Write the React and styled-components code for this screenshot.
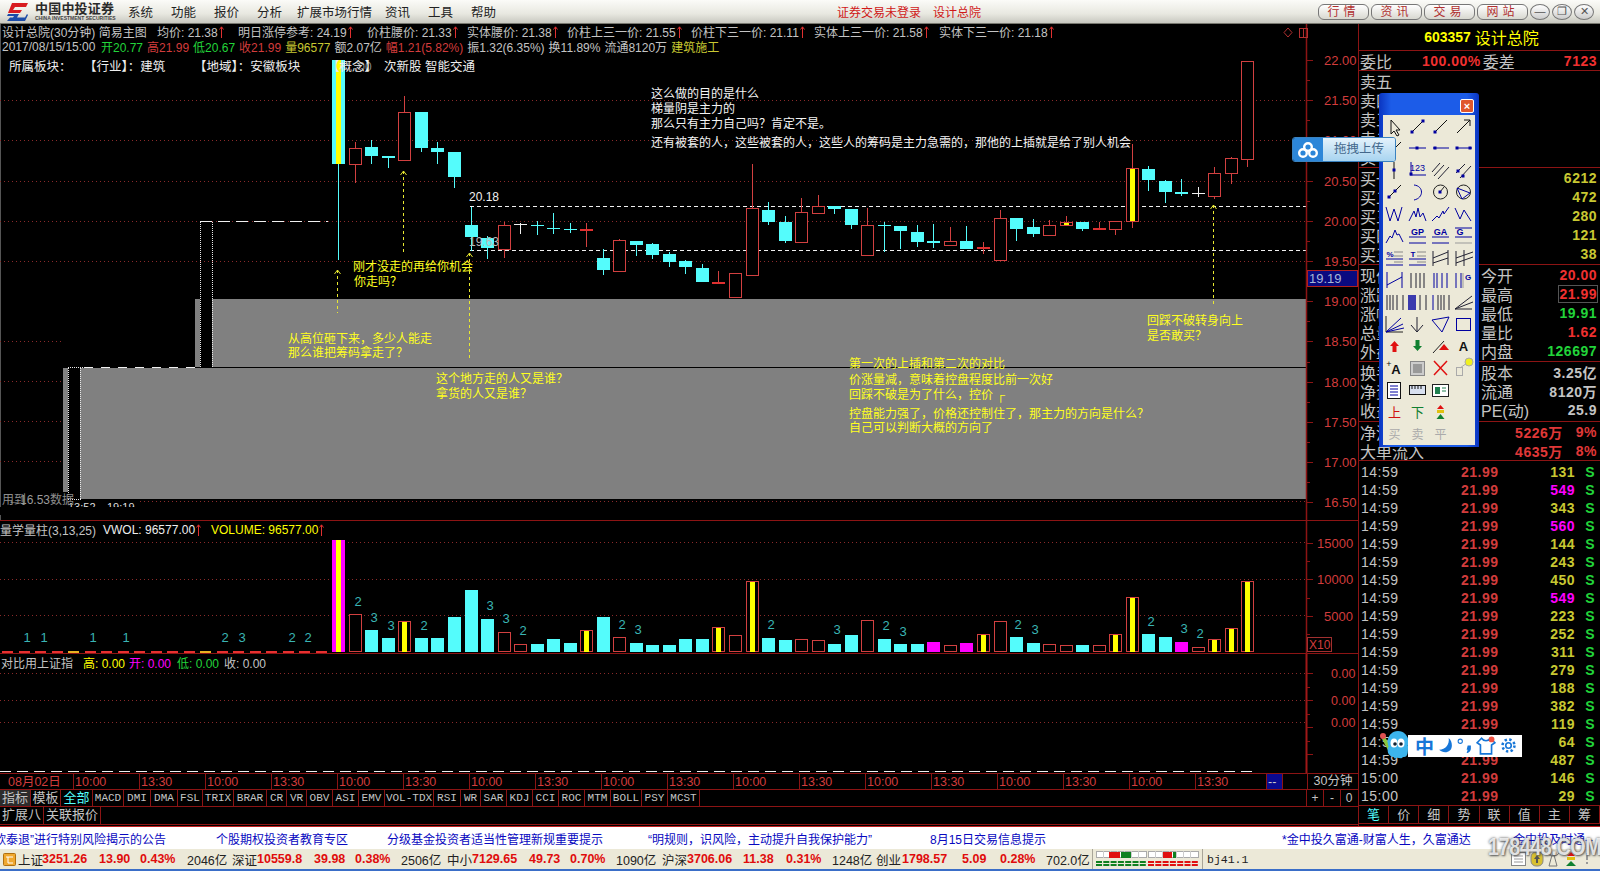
import React from 'react'
import styled, { createGlobalStyle } from 'styled-components'

const SANS = '"Liberation Sans","Noto Sans CJK SC",sans-serif'
const RED = '#d23c3c'
const GRID = '#8a2a2a'
const LINE = '#8c1414'
const CYAN = '#54fcfc'
const YELLOW = '#ffff00'
const MAGENTA = '#ff00ff'
const GRAY = '#c4c4c4'
const GREEN = '#22d43a'
const OLIVE = '#c8c832'

const GlobalStyle = createGlobalStyle`
    html, body{
        margin: 0;
        padding: 0;
        background: #000;
        overflow: hidden;
    }
    *{
        box-sizing: border-box;
    }
`

const Page = styled.div`
    width: 1600px;
    height: 871px;
    position: relative;
    display: flex;
    flex-direction: column;
    overflow: hidden;
    background: #000;
    font-family: ${SANS};
    font-size: 12px;
    color: ${GRAY};
`

/* ---------- title bar ---------- */

const TitleBar = styled.div`
    height: 24px;
    flex: none;
    display: flex;
    align-items: center;
    background: linear-gradient(#fbfbf8, #e8e8e0 60%, #c8c8c0);
    border-bottom: 1px solid #77776f;
    color: #222;
`
const Brand = styled.div`
    width: 128px;
    display: flex;
    align-items: center;
    padding-left: 7px;
`
const BrandText = styled.div`
    margin-left: 7px;
    display: flex;
    flex-direction: column;
    line-height: 1;
    strong{
        font-size: 13px;
        letter-spacing: 0.2px;
        color: #2a2a2a;
    }
    span{
        margin-top: 1px;
        font-size: 5px;
        font-weight: 700;
        color: #444;
        white-space: nowrap;
    }
`
const Menu = styled.div`
    display: flex;
    width: 709px;
`
const MenuItem = styled.span`
    width: ${p => p.$w}px;
    font-size: 12.5px;
`
const LoginState = styled.div`
    display: flex;
    gap: 12px;
    color: #d01818;
    font-size: 12px;
`
const WindowButtons = styled.div`
    margin-left: auto;
    margin-right: 6px;
    display: flex;
    align-items: center;
    gap: 2px;
`
const PillButton = styled.div`
    width: 51px;
    height: 16px;
    border: 1px solid #777;
    border-radius: 6px;
    background: linear-gradient(#fff, #d8d8d0);
    font-size: 12px;
    line-height: 14px;
    text-align: center;
    letter-spacing: 4px;
    color: #b03030;
`
const RoundButton = styled.div`
    width: 20px;
    height: 16px;
    border: 1px solid #777;
    border-radius: 50%;
    background: linear-gradient(#fff, #ccc);
    font-size: 11px;
    line-height: 13px;
    text-align: center;
    color: #555;
`

/* ---------- panes ---------- */

const Body = styled.div`
    display: flex;
    height: 802px;
    flex: none;
`
const LeftColumn = styled.div`
    width: 1358px;
    flex: none;
    display: flex;
    flex-direction: column;
`
const Pane = styled.div`
    position: relative;
    height: ${p => p.$h}px;
    flex: none;
    border-bottom: ${p => p.$line ? `1px solid ${LINE}` : 'none'};
`
const ChartSvg = styled.svg`
    position: absolute;
    left: 0;
    top: 0;
    display: block;
    font-family: ${SANS};
`
const InfoRow = styled.div`
    position: relative;
    display: flex;
    align-items: center;
    height: ${p => p.$h || 15}px;
    padding-left: ${p => p.$pad || 0}px;
    gap: ${p => p.$gap || 0}px;
    white-space: nowrap;
    font-size: ${p => p.$fs || 12}px;
`
const InfoCell = styled.span`
    display: inline-flex;
    align-items: center;
    width: ${p => p.$w ? `${p.$w}px` : 'auto'};
    flex: none;
    color: ${p => p.$c || GRAY};
`
const Shade = styled.span`
    color: ${p => p.$c};
`
const Annotation = styled.div`
    position: absolute;
    left: ${p => p.$x}px;
    top: ${p => p.$y - 7}px;
    height: 14px;
    line-height: 14px;
    font-size: 12px;
    white-space: nowrap;
    color: ${p => p.$c || (p.$white ? '#f4f4f4' : '#ffff20')};
`

const AxisRow = styled.div`
    height: 17px;
    flex: none;
    display: flex;
    border-top: 1px solid ${LINE};
    border-bottom: 1px solid ${LINE};
`
const TimeCell = styled.div`
    width: ${p => p.$w}px;
    flex: none;
    padding-left: ${p => p.$pad ?? 1}px;
    border-right: 1px solid ${LINE};
    line-height: 17px;
    font-size: 12.5px;
    color: ${p => p.$blue ? '#ccc' : RED};
    background: ${p => p.$blue ? '#0a0a90' : 'transparent'};
`
const PeriodCell = styled.div`
    width: 51px;
    margin-left: auto;
    border-left: 1px solid ${LINE};
    text-align: center;
    line-height: 15px;
    font-size: 12.5px;
    color: ${GRAY};
`
const TabRow = styled.div`
    height: ${p => p.$h}px;
    flex: none;
    display: flex;
    border-bottom: 1px solid ${LINE};
`
const Tab = styled.div`
    width: ${p => p.$w}px;
    flex: none;
    border-right: 1px solid ${LINE};
    text-align: center;
    line-height: 16px;
    white-space: nowrap;
    font-size: ${p => p.$latin ? 11 : 13}px;
    font-family: ${p => p.$latin ? '"Liberation Mono",monospace' : SANS};
    color: ${p => p.$on ? CYAN : GRAY};
    background: ${p => p.$dark ? '#2c2c2c' : 'transparent'};
`
const StepCell = styled.div`
    width: 17px;
    flex: none;
    border-left: 1px solid ${LINE};
    text-align: center;
    line-height: 16px;
    color: ${GRAY};
`
const StepBox = styled.div`
    margin-left: auto;
    display: flex;
    width: 52px;
`

/* ---------- quote panel ---------- */

const QuotePanel = styled.div`
    width: 242px;
    flex: none;
    display: flex;
    flex-direction: column;
    border-left: 1px solid ${LINE};
`
const PanelTitle = styled.div`
    height: 27px;
    flex: none;
    display: flex;
    align-items: center;
    justify-content: center;
    gap: 4px;
    padding-left: 4px;
    border-bottom: 1px solid ${LINE};
    color: ${YELLOW};
    font-size: 16px;
    strong{
        font-size: 14px;
    }
`
const Section = styled.div`
    flex: none;
    border-bottom: 1px solid ${LINE};
    padding-bottom: ${p => p.$pb || 0}px;
`
const QuoteRow = styled.div`
    height: ${p => p.$h || 19}px;
    display: flex;
    align-items: center;
    padding: 0 3px 0 1px;
    white-space: nowrap;
`
const QuoteLabel = styled.span`
    width: ${p => p.$w || 'auto'}px;
    flex: none;
    font-size: 16px;
    color: ${GRAY};
`
const QuoteValue = styled.span`
    margin-left: ${p => p.$left ? 0 : 'auto'};
    font-size: 14px;
    font-weight: 700;
    letter-spacing: 0.5px;
    color: ${p => p.$c};
    outline: ${p => p.$boxed ? '1px solid #555' : 'none'};
`
const TickList = styled.div`
    flex: none;
    height: 345px;
    padding-top: 2px;
    border-bottom: 1px solid ${LINE};
`
const TickRow = styled.div`
    height: 18px;
    display: grid;
    grid-template-columns: 100px 50px 64px 1fr;
    align-items: center;
    padding-left: 2px;
    font-size: 14px;
    letter-spacing: 0.5px;
    span:nth-child(1){ color: ${GRAY}; }
    span:nth-child(2){ color: ${RED}; font-weight: 700; }
    span:nth-child(3){ color: ${p => p.$hot ? MAGENTA : OLIVE}; font-weight: 700; text-align: right; }
    span:nth-child(4){ color: ${GREEN}; font-weight: 700; text-align: right; padding-right: 5px; }
`
const PanelTabs = styled.div`
    height: 18px;
    flex: none;
    display: grid;
    grid-template-columns: repeat(8, 1fr);
    border-bottom: 1px solid ${LINE};
`
const PanelTab = styled.div`
    border-right: 1px solid ${LINE};
    text-align: center;
    line-height: 17px;
    font-size: 13px;
    color: ${p => p.$on ? CYAN : GRAY};
`

/* ---------- bottom bars ---------- */

const NewsBar = styled.div`
    height: 23px;
    flex: none;
    display: flex;
    align-items: center;
    overflow: hidden;
    background: #fff;
    border-top: 1px solid #c02020;
    color: #0808c0;
    font-size: 12px;
    white-space: nowrap;
`
const NewsItem = styled.span`
    width: ${p => p.$w}px;
    flex: none;
    margin-left: ${p => p.$ml || 0}px;
`
const StatusBar = styled.div`
    height: 22px;
    flex: none;
    display: flex;
    align-items: center;
    background: #ece9d8;
    border-bottom: 2px solid #3a6ec8;
    color: #222;
    white-space: nowrap;
    font-size: 12.5px;
`
const StatusCell = styled.span`
    width: ${p => p.$w}px;
    flex: none;
    font-weight: ${p => p.$red ? 700 : 400};
    color: ${p => p.$red ? '#e00c0c' : '#222'};
`
const StatusDivider = styled.span`
    width: 1px;
    height: 20px;
    flex: none;
    margin-right: ${p => p.$mr}px;
    background: #a8a598;
`
const StatusGap = styled.span`
    width: ${p => p.$w}px;
    flex: none;
`
const ServerName = styled.span`
    width: 304px;
    flex: none;
    font-family: "Liberation Mono",monospace;
    font-size: 11.5px;
`

/* ---------- floating windows ---------- */

const ToolWindow = styled.div`
    position: absolute;
    left: 1379px;
    top: 93px;
    width: 100px;
    height: 354px;
    padding: 0 4px 4px;
    display: flex;
    flex-direction: column;
    background: linear-gradient(90deg, #0a34c0, #1c5ce8 12%, #1c5ce8 88%, #0a34c0);
    border-radius: 3px 3px 0 0;
`
const ToolHead = styled.div`
    height: 22px;
    flex: none;
    display: flex;
    justify-content: flex-end;
    align-items: center;
    padding: 3px 1px 0 0;
`
const CloseButton = styled.div`
    width: 14px;
    height: 14px;
    border: 1px solid #fff;
    border-radius: 2px;
    background: #e0562c;
    color: #fff;
    font-size: 11px;
    font-weight: 700;
    line-height: 12px;
    text-align: center;
`
const ToolGrid = styled.div`
    flex: 1;
    display: grid;
    grid-template-columns: repeat(4, 23px);
    grid-auto-rows: 22px;
    background: #ece9d8;
`
const ToolCell = styled.svg`
    width: 23px;
    height: 22px;
    font-family: ${SANS};
`
const UploadChip = styled.div`
    position: absolute;
    left: 1292px;
    top: 137px;
    width: 104px;
    height: 25px;
    display: flex;
    border: 1px solid #3a82c0;
    border-radius: 3px;
    overflow: hidden;
`
const UploadIcon = styled.div`
    width: 30px;
    display: flex;
    align-items: center;
    justify-content: center;
    background: #2c86d8;
`
const UploadLabel = styled.div`
    flex: 1;
    background: linear-gradient(#e4f2fb, #a8d4f0);
    color: #44688c;
    font-size: 12.5px;
    line-height: 23px;
    text-align: center;
`
const ImeBar = styled.div`
    position: absolute;
    left: 1380px;
    top: 731px;
    display: flex;
    align-items: center;
`
const ImeStrip = styled.div`
    width: 114px;
    height: 22px;
    margin-left: -1px;
    display: flex;
    align-items: center;
    justify-content: space-around;
    padding: 0 3px 0 5px;
    background: #fff;
    color: #1676d8;
    font-size: 19px;
    font-weight: 700;
`
const Watermark = styled.div`
    position: absolute;
    left: 1488px;
    top: 834px;
    font-family: "Liberation Sans",sans-serif;
    font-size: 23px;
    font-weight: 700;
    letter-spacing: -0.5px;
    transform: scaleX(0.86);
    transform-origin: left top;
    color: rgba(255,255,255,.82);
    text-shadow: 0 0 3px rgba(70,70,70,.95), 1px 1px 2px rgba(90,90,90,.8);
    white-space: nowrap;
`

/* ---------- data ---------- */

// kind, body top, body bottom, wick top, wick bottom (taken from a 3x crop, y = 50 + v / 3)
const candles = [
    ['c', 30, 342, 30, 630], ['r', 295, 341, 277, 398], ['c', 291, 318, 270, 341], ['c', 318, 324, 318, 353],
    ['r', 187, 329, 138, 329], ['c', 186, 294, 186, 305], ['c', 294, 306, 276, 341], ['c', 306, 381, 306, 413],
    ['c', 525, 561, 470, 602], ['c', 565, 594, 558, 626], ['r', 526, 596, 516, 623], ['w', 522, 522, 520, 553],
    ['c', 525, 529, 514, 554], ['c', 534, 538, 490, 551], ['c', 537, 540, 520, 548], ['r', 538, 542, 519, 590],
    ['c', 625, 660, 598, 674], ['r', 571, 664, 568, 664], ['c', 573, 584, 573, 617], ['c', 582, 614, 578, 626],
    ['c', 612, 636, 605, 650], ['c', 632, 651, 630, 671], ['c', 654, 695, 643, 695], ['r', 697, 701, 664, 701],
    ['r', 670, 741, 670, 744], ['r', 475, 674, 342, 674], ['c', 480, 516, 456, 525], ['c', 516, 573, 498, 578],
    ['r', 487, 575, 444, 575], ['r', 468, 488, 435, 488], ['c', 468, 476, 468, 491], ['c', 477, 524, 477, 536],
    ['r', 526, 616, 474, 616], ['c', 524, 527, 515, 605], ['c', 528, 543, 528, 597], ['c', 546, 575, 526, 590],
    ['c', 573, 578, 522, 593], ['r', 574, 586, 531, 586], ['c', 573, 597, 528, 597], ['r', 591, 598, 577, 613],
    ['r', 505, 631, 480, 632], ['c', 504, 536, 504, 572], ['c', 531, 552, 507, 561], ['r', 526, 554, 511, 554],
    ['y', 516, 524, 498, 524], ['c', 516, 537, 516, 542], ['r', 535, 539, 515, 539], ['r', 514, 536, 514, 554],
    ['y', 355, 514, 283, 534], ['c', 358, 390, 349, 422], ['c', 393, 426, 391, 458], ['c', 427, 431, 388, 438],
    ['w', 430, 430, 411, 441], ['r', 368, 437, 351, 447], ['r', 325, 368, 322, 401], ['r', 34, 328, 34, 350],
]

// kind, top of the bar (y = 500 + v / 3 for the first 18, 520 + v / 3 after)
const volumes = [
    ['m', 120], ['r', 343], ['c', 390], ['c', 414], ['y', 364], ['c', 414], ['c', 414], ['c', 351], ['c', 270],
    ['c', 357], ['r', 397], ['r', 433], ['c', 432], ['c', 417], ['c', 429], ['y', 391], ['c', 351], ['r', 412],
].map(([k, v]) => [k, 500 + v / 3]).concat([
    ['c', 369], ['c', 375], ['c', 375], ['c', 357], ['c', 357], ['y', 322], ['r', 346], ['y', 184], ['c', 354],
    ['c', 360], ['r', 358], ['r', 361], ['c', 372], ['c', 345], ['r', 301], ['c', 357], ['c', 372], ['c', 372],
    ['p', 366], ['r', 376], ['p', 369], ['y', 343], ['r', 304], ['c', 351], ['c', 369], ['r', 373], ['r', 376],
    ['c', 375], ['r', 376], ['y', 343], ['y', 232], ['c', 342], ['c', 351], ['p', 366], ['r', 382], ['y', 358],
    ['y', 325], ['y', 184],
].map(([k, v]) => [k, 520 + v / 3]))

const volumeMarks = [
    [27, 637, 1], [44, 637, 1], [93, 637, 1], [126, 637, 1], [225, 637, 2], [242, 637, 3], [292, 637, 2], [308, 637, 2],
    [358, 601, 2], [374, 617, 3], [391, 625, 3], [424, 625, 2], [490, 605, 3], [506, 618, 3], [523, 630, 2], [622, 624, 2],
    [638, 629, 3], [771, 624, 2], [837, 629, 3], [886, 625, 2], [903, 631, 3], [1018, 624, 2], [1035, 629, 3],
    [1151, 621, 2], [1184, 628, 3], [1200, 633, 2],
]

const candleX = i => Math.round(338.3 + 16.53 * i)
const zy = v => Math.round(50 + v / 3)
const priceLabels = ['22.00', '21.50', '21.00', '20.50', '20.00', '19.50', '19.00', '18.50', '18.00', '17.50', '17.00', '16.50']

const times = Array.from({ length: 18 }, (_, i) => (i % 2 ? '13:30' : '10:00'))
const tabs = [
    ['MACD', 31], ['DMI', 27], ['DMA', 27], ['FSL', 25], ['TRIX', 31], ['BRAR', 33], ['CR', 20], ['VR', 20], ['OBV', 26],
    ['ASI', 26], ['EMV', 26], ['VOL-TDX', 49], ['RSI', 27], ['WR', 20], ['SAR', 26], ['KDJ', 26], ['CCI', 26], ['ROC', 26],
    ['MTM', 26], ['BOLL', 31], ['PSY', 26], ['MCST', 32],
]
const ticks = [
    ['14:59', '131'], ['14:59', '549', 1], ['14:59', '343'], ['14:59', '560', 1], ['14:59', '144'], ['14:59', '243'],
    ['14:59', '450'], ['14:59', '549', 1], ['14:59', '223'], ['14:59', '252'], ['14:59', '311'], ['14:59', '279'],
    ['14:59', '188'], ['14:59', '382'], ['14:59', '119'], ['14:59', '64'], ['14:59', '487'], ['15:00', '146'], ['15:00', '29'],
]

/* ---------- drawings ---------- */

const Up = ({ ml = 1 }) => (
    <svg width="5" height="12" viewBox="0 0 5 12" style={{ marginLeft: ml }}>
        <path d="M2.5 12V1M0.5 3.5L2.5 .8L4.5 3.5" fill="none" stroke="#e03030" />
    </svg>
)

const Logo = () => (
    <svg width="21" height="18" viewBox="0 0 21 18">
        <path d="M5 0H21L19 4H8L6 7H15L13 10H1Z" fill="#d81c20" />
        <path d="M1 11H12L10 14.5H18L20 11L21 12L18 18H0L3 14.5H6L7 13H0Z" fill="#1c4ca8" />
    </svg>
)

const Candle = ({ d, i }) => {
    const [kind, bt, bb, wt, wb] = d
    const x = candleX(i)
    const color = kind === 'c' ? CYAN : kind === 'w' ? '#f0f0f0' : '#d24040'
    const top = zy(bt)
    const h = Math.max(zy(bb) - top, 1)
    return (
        <g>
            <line x1={x + .5} x2={x + .5} y1={zy(wt)} y2={zy(wb)} stroke={color} />
            {kind === 'w' && <line x1={x - 6} x2={x + 7} y1={top + .5} y2={top + .5} stroke={color} />}
            {kind === 'c' && <rect x={x - 6} y={top} width={13} height={h} fill={CYAN} />}
            {(kind === 'r' || kind === 'y') && (
                h <= 2
                    ? <rect x={x - 6} y={top} width={13} height={2} fill="#e03030" />
                    : <rect x={x - 5.5} y={top + .5} width={12} height={h} fill="#000" stroke="#d24040" />
            )}
            {kind === 'y' && <rect x={x - 2} y={top + 1} width={5} height={h - 1} fill={YELLOW} />}
            {i === 0 && <rect x={x - 2} y={top} width={5} height={h} fill={YELLOW} />}
        </g>
    )
}

const ArrowGuide = ({ x, y1, y2 }) => (
    <g stroke="#e8e830" fill="none">
        <line x1={x + .5} x2={x + .5} y1={y1} y2={y2} strokeDasharray="3 3" />
        <path d={`M${x - 2.5} ${y1 + 4}L${x + .5} ${y1}L${x + 3.5} ${y1 + 4}`} />
    </g>
)

const Grid = ({ rows, x2 = 1306, x1 = 0 }) => rows.map(y => (
    <line key={y} x1={x1} x2={x2} y1={y + .5} y2={y + .5} stroke={GRID} strokeDasharray="1 3" />
))

const AxisTicks = ({ y0, step, n }) => Array.from({ length: n }, (_, i) => (
    <line key={i} x1={1307} x2={i % 2 ? 1310 : 1313} y1={Math.round(y0 + step * i) + .5} y2={Math.round(y0 + step * i) + .5} stroke={LINE} />
))

const MainChart = () => (
    <ChartSvg width="1358" height="496" viewBox="0 24 1358 496">
        <line x1={.5} x2={.5} y1={24} y2={520} stroke="#555" />
        <Grid rows={[100, 140, 181, 221, 261]} />
        <Grid rows={[341, 381, 421, 461]} x2={62} />
        <Grid rows={[501]} x1={140} />
        <rect x={212} y={299} width={1094} height={68} fill="#808080" />
        <rect x={80} y={368} width={1226} height={131} fill="#808080" />
        <rect x={195} y={299} width={5} height={68} fill="#808080" />
        <rect x={63} y={368} width={5} height={124} fill="#808080" />
        <line x1={68} x2={1306} y1={367.5} y2={367.5} stroke="#000" />
        <line x1={84} x2={195} y1={367.5} y2={367.5} stroke="#f0f0f0" strokeDasharray="9 8" />
        <g stroke="#e8e8e8" strokeDasharray="1 1">
            <line x1={200.5} x2={200.5} y1={222} y2={367} />
            <line x1={212.5} x2={212.5} y1={222} y2={367} />
            <line x1={68.5} x2={68.5} y1={368} y2={499} />
            <line x1={80.5} x2={80.5} y1={368} y2={499} />
            <line x1={68} x2={84} y1={367.5} y2={367.5} />
            <line x1={68} x2={81} y1={499.5} y2={499.5} />
        </g>
        <line x1={200} x2={328} y1={221.5} y2={221.5} stroke="#f0f0f0" strokeDasharray="12 6" />
        <line x1={470} x2={1306} y1={206.5} y2={206.5} stroke="#f0f0f0" strokeDasharray="4 3" />
        <line x1={470} x2={1306} y1={250.5} y2={250.5} stroke="#f0f0f0" strokeDasharray="4 3" />
        <ArrowGuide x={337} y1={270} y2={313} />
        <ArrowGuide x={403} y1={171} y2={253} />
        <ArrowGuide x={469} y1={253} y2={360} />
        <ArrowGuide x={1213} y1={205} y2={305} />
        {candles.map((d, i) => <Candle key={i} d={d} i={i} />)}
        <text x={469} y={201} fontSize={12} fill="#f0f0f0">20.18</text>
        <text x={469} y={246} fontSize={12} fill="#b8b8b8">19.63</text>
        <text x={355} y={71} fontSize={12} fill="#888">.00</text>
        <text x={8} y={504} fontSize={12} fill="#9a9a9a">←16.53</text>
        <text x={68} y={511} fontSize={11} fill="#ddd">13:52</text>
        <text x={107} y={511} fontSize={11} fill="#ddd">19:19</text>
        <rect x={0} y={507} width={140} height={8} fill="#000" />
        <line x1={1306.5} x2={1306.5} y1={24} y2={520} stroke={LINE} strokeWidth={1.5} />
        <AxisTicks y0={60} step={20.1} n={23} />
        {priceLabels.map((p, i) => (
            <text key={p} x={1324} y={Math.round(65 + i * 40.2)} fontSize={13} fill={RED}>{p}</text>
        ))}
        <rect x={1307.5} y={270.5} width={50} height={16} fill="#0a0a80" stroke="#b02020" />
        <text x={1309} y={283} fontSize={13} fill="#a8b8d8">19.19</text>
        <path d="M1284 32.5L1288 28L1292 32.5L1288 37Z" fill="none" stroke="#b03030" />
        <rect x={1299.5} y={28.5} width={8} height={9} fill="none" stroke="#b03030" />
        <line x1={1303.5} x2={1303.5} y1={28} y2={38} stroke="#b03030" />
    </ChartSvg>
)

const VolumeChart = () => {
    const base = 652
    const dashes = Array.from({ length: 20 }, (_, i) => 2 + i * 16.5)
    return (
        <ChartSvg width="1358" height="132" viewBox="0 521 1358 132">
            <Grid rows={[542, 579, 615]} />
            {dashes.map((x, i) => (
                <rect key={x} x={Math.round(x)} y={base - 1} width={11} height={2} fill={i === 4 || i === 12 ? '#e8b020' : '#e83030'} />
            ))}
            {volumes.map(([k, top], i) => {
                const x = candleX(i)
                const y = Math.round(top)
                if (k === 'c' || k === 'p' || k === 'm') {
                    return (
                        <g key={i}>
                            <rect x={x - 6} y={y} width={13} height={base - y} fill={k === 'c' ? CYAN : MAGENTA} />
                            {k === 'm' && <rect x={x - 2} y={y} width={5} height={base - y} fill={YELLOW} />}
                        </g>
                    )
                }
                return (
                    <g key={i}>
                        <rect x={x - 5.5} y={y + .5} width={12} height={base - y - 1} fill="#000" stroke="#d24040" />
                        {k === 'y' && <rect x={x - 2} y={y + 1} width={5} height={base - y - 1} fill={YELLOW} />}
                    </g>
                )
            })}
            {volumeMarks.map(([x, y, n], i) => (
                <text key={i} x={x} y={y + 5} fontSize={13} textAnchor="middle" fill="#3ab4b4">{n}</text>
            ))}
            <line x1={1306.5} x2={1306.5} y1={521} y2={653} stroke={LINE} strokeWidth={1.5} />
            <AxisTicks y0={543} step={18.2} n={6} />
            <text x={1317} y={548} fontSize={13} fill={RED}>15000</text>
            <text x={1317} y={584} fontSize={13} fill={RED}>10000</text>
            <text x={1324} y={621} fontSize={13} fill={RED}>5000</text>
            <rect x={1307.5} y={637.5} width={24} height={14} fill="none" stroke="#a03030" />
            <text x={1309} y={649} fontSize={12} fill={RED}>X10</text>
        </ChartSvg>
    )
}

const ContrastChart = () => (
    <ChartSvg width="1358" height="119" viewBox="0 654 1358 119">
        <Grid rows={[673, 700, 722]} />
        <line x1={0} x2={1253} y1={771.5} y2={771.5} stroke="#f0f0f0" strokeDasharray="11 6" />
        <line x1={1306.5} x2={1306.5} y1={654} y2={773} stroke="#a01818" strokeWidth={2} />
        <AxisTicks y0={673} step={13.5} n={7} />
        <text x={1331} y={678} fontSize={12.5} fill={RED}>0.00</text>
        <text x={1331} y={705} fontSize={12.5} fill={RED}>0.00</text>
        <text x={1331} y={727} fontSize={12.5} fill={RED}>0.00</text>
    </ChartSvg>
)

const navy = '#0000a0'
const Dot = ({ x, y }) => <rect x={x - 1.5} y={y - 1.5} width={3} height={3} fill={navy} />
const Lines = ({ d, c = navy, w = 1 }) => <path d={d} fill="none" stroke={c} strokeWidth={w} />
const Label = ({ x = 11.5, y = 15, s = 12, c = '#000', w = 400, children }) => (
    <text x={x} y={y} fontSize={s} fill={c} fontWeight={w} textAnchor="middle">{children}</text>
)

const tools = [
    <Lines d="M8 5V19L11 16L14 21L16 20L13 15H17Z" c="#111" />,
    <><Lines d="M6 17L17 6" c="#111" /><Dot x={6} y={17} /><Dot x={17} y={6} /></>,
    <><Lines d="M5 18L18 5" c="#111" /><Dot x={6} y={17} /></>,
    <Lines d="M5 18L18 5M12 5H18V11" c="#111" />,
    <><Lines d="M5 18L18 5" c="#111" /><Dot x={7} y={16} /></>,
    <><Lines d="M3 11H20" /><Dot x={11} y={11} /></>,
    <><Lines d="M4 11H20" /><Dot x={6} y={11} /></>,
    <><Lines d="M4 11H20" /><Dot x={5} y={11} /><Dot x={18} y={11} /></>,
    <><Lines d="M11 3V20" c="#111" /><Dot x={11} y={11} /></>,
    <><Label y={12} s={9} c={navy}>123</Label><Lines d="M4 16H20M5 3V15" /><Dot x={5} y={15} /></>,
    <Lines d="M3 13L11 4M5 17L15 6M9 20L20 8" c="#223" />,
    <><Lines d="M4 14L13 5M8 19L19 7" c="#223" /><Dot x={6} y={12} /><Dot x={11} y={17} /></>,
    <><Lines d="M6 16L18 4" c="#111" /><Dot x={6} y={16} /><Dot x={12} y={10} /></>,
    <Lines d="M8 4C18 5 18 17 8 19" />,
    <><circle cx={11.5} cy={11} r={7} fill="none" stroke="#222" /><Lines d="M11 11L15 6" c="#222" /><Dot x={11} y={11} /></>,
    <><circle cx={11.5} cy={11} r={7} fill="none" stroke="#222" /><Lines d="M5 7L18 12L10 18Z" c={navy} /></>,
    <Lines d="M3 4L7 18L11 6L15 18L19 4" />,
    <Lines d="M3 18L8 8L10 14L12 5L14 14L17 10L20 18" />,
    <Lines d="M3 18L8 13L10 15L14 8L15 11L20 4" />,
    <Lines d="M3 5L8 16L12 7L19 18" />,
    <Lines d="M3 18L7 11L9 13L12 5L14 10L16 9L20 17" />,
    <><Label y={10} s={9} c={navy} w={700}>GP</Label><Lines d="M3 12H20M3 18H20" /></>,
    <><Label y={10} s={9} c={navy} w={700}>GA</Label><Lines d="M3 12H20M3 18H20" /></>,
    <><Label x={8} y={10} s={9} c={navy} w={700}>G</Label><Lines d="M3 3H20M3 12H20" /><Lines d="M3 18H20" c="#999" /></>,
    <><Label x={7} y={10} s={8} c={navy} w={700}>%</Label><Lines d="M3 12H20M3 18H20" /><Lines d="M11 5H20M11 9H20M11 15H20" c="#888" /></>,
    <><Label x={7} y={10} s={8} c={navy} w={700}>T</Label><Lines d="M3 12H20M3 18H20" /><Lines d="M11 5H20M11 9H20M11 15H20" c="#888" /></>,
    <Lines d="M4 4V19M19 3V18M4 11L19 5M4 16L19 11" c="#223" />,
    <Lines d="M4 4V19M12 3V19M4 11L21 5M4 16L21 10" c="#223" />,
    <Lines d="M4 3V19M19 3V19M4 16L19 8" />,
    <Lines d="M5 4V19M10 4V19M14 4V19M18 4V19" c="#223" />,
    <Lines d="M5 4V19M8 4V19M13 4V19M18 4V19" />,
    <><Lines d="M4 4V19M9 4V19" /><Lines d="M11 4V19" c="#999" /><text x={13} y={11} fontSize={8} fontWeight={700} fill={navy}>G</text></>,
    <Lines d="M4 4V19M7 4V19M10 4V19M14 4V19M20 4V19" c="#223" />,
    <><Lines d="M3 4V19M5 4V19M7 4V19M9 4V19" w={1.5} /><Lines d="M14 4V19M20 4V19" c="#223" /></>,
    <><Lines d="M4 4V19" /><Lines d="M9 4V19M12 4V19M15 4V19M20 4V19" c="#223" /></>,
    <Lines d="M3 18L20 5M3 18L21 11M3 18H20" c="#223" />,
    <><Lines d="M3 3V19H20" c="#222" /><Lines d="M3 19L18 5M3 19L20 11M3 19L21 15" /></>,
    <Lines d="M11 4V19M5 12L11 19L17 12" c="#223" />,
    <Lines d="M3 7L20 4L13 19Z" />,
    <rect x={4.5} y={5.5} width={14} height={12} fill="none" stroke={navy} />,
    <path d="M11.5 6L16 11H13.5V17H9.5V11H7Z" fill="#e01010" />,
    <path d="M9.5 5H13.5V11H16L11.5 16L7 11H9.5Z" fill="#108030" />,
    <><Lines d="M4 18L15 6" c="#222" /><path d="M15 9L20 15H10Z" fill="#e01010" /></>,
    <Label y={16} s={13} w={700} c="#111">A</Label>,
    <><Label x={13} y={17} s={13} w={700} c="#111">A</Label><Label x={6} y={10} s={9} c="#111">+</Label></>,
    <><rect x={4.5} y={4.5} width={14} height={14} fill="#ccc" stroke="#888" /><rect x={7} y={7} width={9} height={9} fill="#999" /></>,
    <Lines d="M5 4L18 18M18 4L5 18" c="#e01010" w={1.5} />,
    <><rect x={4.5} y={10.5} width={6} height={8} fill="none" stroke="#aaa" /><Lines d="M8 11L15 6" c="#aaa" /><circle cx={17} cy={5} r={4} fill="#f0f020" stroke="#aaa" /></>,
    <><rect x={4.5} y={3.5} width={13} height={16} fill="#fff" stroke="#111" /><Lines d="M7 7H15M7 10H15M7 13H15M7 16H15" /></>,
    <><rect x={3.5} y={6.5} width={16} height={9} fill="#d8e0f0" stroke="#111" /><Lines d="M6 7V10M9 7V10M12 7V10M15 7V10" c="#111" /></>,
    <><rect x={3.5} y={5.5} width={16} height={12} fill="#fff" stroke="#222" /><rect x={6} y={8} width={5} height={7} fill="#208050" /><Lines d="M13 9H17M13 12H17" c="#208050" /></>,
    <g />,
    <Label y={16} s={13} c="#d01010">上</Label>,
    <Label y={16} s={13} c="#108030">下</Label>,
    <><path d="M11.5 4L15 8H8Z" fill="#e01010" /><rect x={8} y={9} width={7} height={3} fill="#e0c010" /><path d="M11.5 13L15.5 18H7.5Z" fill="#108030" /></>,
    <g />,
    <Label y={16} s={12} c="#aaa">买</Label>,
    <Label y={16} s={12} c="#aaa">卖</Label>,
    <Label y={16} s={12} c="#aaa">平</Label>,
    <g />,
]

const Mascot = () => (
    <svg width="29" height="29" viewBox="0 0 29 29">
        <path d="M1 6L4 4L14 22L11 25Z" fill="#8cc83c" />
        <circle cx={3} cy={5} r={3} fill="#e05050" />
        <ellipse cx={18} cy={11} rx={10.5} ry={11} fill="#3cb4ec" />
        <path d="M8 16C6 27 14 24 15 28C17 25 21 29 23 26C28 27 28 21 28 15Z" fill="#3cb4ec" />
        <ellipse cx={14} cy={12} rx={3.5} ry={4.5} fill="#fff" />
        <ellipse cx={21} cy={12} rx={3.5} ry={4.5} fill="#fff" />
        <circle cx={15} cy={13} r={1.8} fill="#123" />
        <circle cx={21} cy={13} r={1.8} fill="#123" />
    </svg>
)

const SignalBox = ({ red, green, lower }) => (
    <svg width="51" height="16" viewBox="0 0 51 16">
        <rect x={.5} y={.5} width={50} height={6} fill="#fff" stroke="#aaa" />
        {[7, 14, 21, 28, 35, 42].map(x => <line key={x} x1={x + .5} x2={x + .5} y1={0} y2={7} stroke="#ccc" />)}
        <rect x={red[0]} y={1} width={red[1]} height={6} fill="#e01010" />
        <rect x={green[0]} y={1} width={green[1]} height={6} fill="#108020" />
        {[0, 1, 2, 3, 4, 5, 6].map(i => <rect key={i} x={i * 7.3} y={10} width={6} height={2} fill={lower} />)}
        {[0, 1, 2, 3, 4, 5, 6].map(i => <rect key={i} x={i * 7.3} y={13} width={6} height={2} fill={lower} />)}
    </svg>
)

const TrayIcons = () => (
    <svg width="82" height="16" viewBox="0 0 82 16">
        <rect x={.5} y={1.5} width={14} height={13} fill="#fff" stroke="#888" />
        <path d="M3 5H12M3 8H12M3 11H12" stroke="#999" />
        <rect x={20} y={1} width={12} height={14} rx={5} fill="#d8c030" stroke="#888" />
        <path d="M26 4L29 8H27V12H25V8H23Z" fill="#555" />
        <path d="M41 4L38 15H46L43 4ZM39 3C40 5 44 5 45 3M36 2C38 6 46 6 48 2" fill="none" stroke="#777" />
        <path d="M60 1L64 5H56Z" fill="#e01010" />
        <rect x={56} y={6} width={8} height={3} fill="#e0c010" />
        <path d="M60 10L65 15H55Z" fill="#108030" />
        <path d="M76 2V9" stroke="#999" strokeWidth={2} />
        <rect x={75} y={11} width={2} height={2} fill="#999" />
    </svg>
)

function App() {
    return (
        <Page>
            <GlobalStyle />
            <TitleBar>
                <Brand>
                    <Logo />
                    <BrandText>
                        <strong>中国中投证券</strong>
                        <span>CHINA INVESTMENT SECURITIES</span>
                    </BrandText>
                </Brand>
                <Menu>
                    {[['系统', 43], ['功能', 43], ['报价', 43], ['分析', 40], ['扩展市场行情', 88], ['资讯', 43], ['工具', 43], ['帮助', 366]].map(([t, w]) => (
                        <MenuItem key={t} $w={w}>{t}</MenuItem>
                    ))}
                </Menu>
                <LoginState>
                    <span>证券交易未登录</span>
                    <span>设计总院</span>
                </LoginState>
                <WindowButtons>
                    <PillButton>行情</PillButton>
                    <PillButton>资讯</PillButton>
                    <PillButton>交易</PillButton>
                    <PillButton>网站</PillButton>
                    <RoundButton>—</RoundButton>
                    <RoundButton>❐</RoundButton>
                    <RoundButton>✕</RoundButton>
                </WindowButtons>
            </TitleBar>

            <Body>
                <LeftColumn>
                    <Pane $h={497} $line>
                        <MainChart />
                        <InfoRow $h={15} $pad={2}>
                            <InfoCell $w={155}>设计总院(30分钟) 简易主图</InfoCell>
                            <InfoCell $w={81}>均价: 21.38<Up /></InfoCell>
                            <InfoCell $w={129}>明日涨停参考: 24.19<Up /></InfoCell>
                            <InfoCell $w={100}>价柱腰价: 21.33<Up /></InfoCell>
                            <InfoCell $w={100}>实体腰价: 21.38<Up /></InfoCell>
                            <InfoCell $w={124}>价柱上三一价: 21.55<Up /></InfoCell>
                            <InfoCell $w={123}>价柱下三一价: 21.11<Up /></InfoCell>
                            <InfoCell $w={125}>实体上三一价: 21.58<Up /></InfoCell>
                            <InfoCell>实体下三一价: 21.18<Up /></InfoCell>
                        </InfoRow>
                        <InfoRow $h={15} $pad={2} $gap={4}>
                            <InfoCell $w={95}>2017/08/15/15:00</InfoCell>
                            <InfoCell $c={GREEN}>开20.77</InfoCell>
                            <InfoCell $c={RED}>高21.99</InfoCell>
                            <InfoCell $c={GREEN}>低20.67</InfoCell>
                            <InfoCell $c={RED}>收21.99</InfoCell>
                            <InfoCell $c={OLIVE}>量96577</InfoCell>
                            <InfoCell>额2.07亿</InfoCell>
                            <InfoCell $c={RED}>幅1.21(5.82%)</InfoCell>
                            <InfoCell>振1.32(6.35%)</InfoCell>
                            <InfoCell>换11.89%</InfoCell>
                            <InfoCell>流通8120万</InfoCell>
                            <InfoCell $c={OLIVE}>建筑施工</InfoCell>
                        </InfoRow>
                        <InfoRow $h={23} $pad={9} $fs={12.5}>
                            <InfoCell $w={75} $c="#eee">所属板块：</InfoCell>
                            <InfoCell $w={110} $c="#eee">【行业】：建筑</InfoCell>
                            <InfoCell $w={133} $c="#eee">【地域】：安徽板块</InfoCell>
                            <InfoCell $w={57} $c="#eee">【概念】</InfoCell>
                            <InfoCell $c="#eee">次新股 智能交通</InfoCell>
                        </InfoRow>

                        <Annotation $white $x={651} $y={70}>这么做的目的是什么</Annotation>
                        <Annotation $white $x={651} $y={85}>梯量阴是主力的</Annotation>
                        <Annotation $white $x={651} $y={100}>那么只有主力自己吗？肯定不是。</Annotation>
                        <Annotation $white $x={651} $y={119}>还有被套的人，这些被套的人，这些人的筹码是主力急需的，那他的上插就是给了别人机会</Annotation>
                        <Annotation $x={353} $y={243}>刚才没走的再给你机会</Annotation>
                        <Annotation $x={354} $y={258}>你走吗？</Annotation>
                        <Annotation $x={288} $y={315}>从高位砸下来，多少人能走</Annotation>
                        <Annotation $x={288} $y={329}>那么谁把筹码拿走了？</Annotation>
                        <Annotation $x={436} $y={355}>这个地方走的人又是谁？</Annotation>
                        <Annotation $x={436} $y={370}>拿货的人又是谁？</Annotation>
                        <Annotation $x={1147} $y={297}>回踩不破转身向上</Annotation>
                        <Annotation $x={1147} $y={312}>是否敢买？</Annotation>
                        <Annotation $x={849} $y={340}>第一次的上插和第二次的对比</Annotation>
                        <Annotation $x={849} $y={356}>价涨量减，意味着控盘程度比前一次好</Annotation>
                        <Annotation $x={849} $y={371}>回踩不破是为了什么，控价 ┌</Annotation>
                        <Annotation $x={849} $y={390}>控盘能力强了，价格还控制住了，那主力的方向是什么？</Annotation>
                        <Annotation $x={849} $y={404}>自己可以判断大概的方向了</Annotation>
                        <Annotation $x={2} $y={476} $c="#8c8c8c">用到</Annotation>
                        <Annotation $x={50} $y={476} $c="#8c8c8c">数据</Annotation>
                    </Pane>
                    <Pane $h={133} $line>
                        <VolumeChart />
                        <InfoRow $h={17}>
                            <InfoCell $w={103}>量学量柱(3,13,25)</InfoCell>
                            <InfoCell $w={108} $c="#eee">VWOL: 96577.00<Up /></InfoCell>
                            <InfoCell $c={YELLOW}>VOLUME: 96577.00<Up /></InfoCell>
                        </InfoRow>
                    </Pane>
                    <Pane $h={119}>
                        <ContrastChart />
                        <InfoRow $h={16} $pad={1}>
                            <InfoCell $w={82}>对比用上证指</InfoCell>
                            <InfoCell $w={46} $c={YELLOW}>高: 0.00</InfoCell>
                            <InfoCell $w={48} $c={MAGENTA}>开: 0.00</InfoCell>
                            <InfoCell $w={47} $c={GREEN}>低: 0.00</InfoCell>
                            <InfoCell>收: 0.00</InfoCell>
                        </InfoRow>
                    </Pane>
                    <AxisRow>
                        <TimeCell $w={74} $pad={8}>08月02日</TimeCell>
                        {times.map((t, i) => <TimeCell key={i} $w={i === 17 ? 71 : 66}>{t}</TimeCell>)}
                        <TimeCell $w={16} $blue>--</TimeCell>
                        <PeriodCell>30分钟</PeriodCell>
                    </AxisRow>
                    <TabRow $h={17}>
                        <Tab $w={31} $dark>指标</Tab>
                        <Tab $w={30}>模板</Tab>
                        <Tab $w={32} $on>全部</Tab>
                        {tabs.map(([t, w]) => <Tab key={t} $w={w} $latin>{t}</Tab>)}
                        <StepBox>
                            <StepCell>+</StepCell>
                            <StepCell>-</StepCell>
                            <StepCell>0</StepCell>
                        </StepBox>
                    </TabRow>
                    <TabRow $h={18}>
                        <Tab $w={44}>扩展八</Tab>
                        <Tab $w={57}>关联报价</Tab>
                    </TabRow>
                </LeftColumn>

                <QuotePanel>
                    <PanelTitle><strong>603357</strong> 设计总院</PanelTitle>
                    <Section>
                        <QuoteRow>
                            <QuoteLabel $w={62}>委比</QuoteLabel>
                            <QuoteValue $left $c="#f03030">100.00%</QuoteValue>
                            <QuoteLabel style={{ marginLeft: 2 }}>委差</QuoteLabel>
                            <QuoteValue $c="#f03030">7123</QuoteValue>
                        </QuoteRow>
                    </Section>
                    <Section $pb={1}>
                        {['卖五', '卖四', '卖三', '卖二', '卖一'].map(t => <QuoteRow key={t}><QuoteLabel>{t}</QuoteLabel></QuoteRow>)}
                    </Section>
                    <Section $pb={1}>
                        {[['买一', '6212'], ['买二', '472'], ['买三', '280'], ['买四', '121'], ['买五', '38']].map(([t, v]) => (
                            <QuoteRow key={t}><QuoteLabel>{t}</QuoteLabel><QuoteValue $c={OLIVE}>{v}</QuoteValue></QuoteRow>
                        ))}
                    </Section>
                    <Section $pb={1}>
                        {[['现价', '今开', '20.00', '#f03030'], ['涨跌', '最高', '21.99', '#f03030', 1], ['涨幅', '最低', '19.91', GREEN], ['总量', '量比', '1.62', '#f03030'], ['外盘', '内盘', '126697', GREEN]].map(([a, b, v, c, boxed]) => (
                            <QuoteRow key={a}>
                                <QuoteLabel $w={121}>{a}</QuoteLabel>
                                <QuoteLabel>{b}</QuoteLabel>
                                <QuoteValue $c={c} $boxed={boxed}>{v}</QuoteValue>
                            </QuoteRow>
                        ))}
                    </Section>
                    <Section $pb={2}>
                        {[['换手', '股本', '3.25亿'], ['净资', '流通', '8120万'], ['收益', 'PE(动)', '25.9']].map(([a, b, v]) => (
                            <QuoteRow key={a}>
                                <QuoteLabel $w={121}>{a}</QuoteLabel>
                                <QuoteLabel>{b}</QuoteLabel>
                                <QuoteValue $c={GRAY}>{v}</QuoteValue>
                            </QuoteRow>
                        ))}
                    </Section>
                    <Section>
                        {[['净流入', '5226万', '9%'], ['大单流入', '4635万', '8%']].map(([a, v, p]) => (
                            <QuoteRow key={a}>
                                <QuoteLabel>{a}</QuoteLabel>
                                <QuoteValue $c="#e03838">{v}</QuoteValue>
                                <QuoteValue $c="#e03838" style={{ marginLeft: 13 }}>{p}</QuoteValue>
                            </QuoteRow>
                        ))}
                    </Section>
                    <TickList>
                        {ticks.map(([t, v, hot], i) => (
                            <TickRow key={i} $hot={hot}>
                                <span>{t}</span>
                                <span>21.99</span>
                                <span>{v}</span>
                                <span>S</span>
                            </TickRow>
                        ))}
                    </TickList>
                    <PanelTabs>
                        {['笔', '价', '细', '势', '联', '值', '主', '筹'].map((t, i) => <PanelTab key={t} $on={i === 0}>{t}</PanelTab>)}
                    </PanelTabs>
                </QuotePanel>
            </Body>

            <NewsBar>
                <NewsItem $w={222} $ml={-6}>欣泰退”进行特别风险揭示的公告</NewsItem>
                <NewsItem $w={171}>个股期权投资者教育专区</NewsItem>
                <NewsItem $w={261}>分级基金投资者适当性管理新规重要提示</NewsItem>
                <NewsItem $w={282}>“明规则，识风险，主动提升自我保护能力”</NewsItem>
                <NewsItem $w={352}>8月15日交易信息提示</NewsItem>
                <NewsItem $w={231}>*金中投久富通-财富人生，久富通达</NewsItem>
                <NewsItem $w={100}>金中投及时通--</NewsItem>
            </NewsBar>
            <StatusBar>
                <svg width="18" height="16" viewBox="0 0 18 16">
                    <rect x={3.5} y={2.5} width={12} height={12} rx={1} fill="#f0a830" stroke="#b07010" />
                    <path d="M6 6H13M8 6V12H13" fill="none" stroke="#fff" />
                </svg>
                <StatusCell $w={24}>上证</StatusCell>
                <StatusCell $w={57} $red>3251.26</StatusCell>
                <StatusCell $w={41} $red>13.90</StatusCell>
                <StatusCell $w={47} $red>0.43%</StatusCell>
                <StatusCell $w={45}>2046亿</StatusCell>
                <StatusCell $w={25}>深证</StatusCell>
                <StatusCell $w={57} $red>10559.8</StatusCell>
                <StatusCell $w={41} $red>39.98</StatusCell>
                <StatusCell $w={46} $red>0.38%</StatusCell>
                <StatusCell $w={46}>2506亿</StatusCell>
                <StatusCell $w={25}>中小</StatusCell>
                <StatusCell $w={57} $red>7129.65</StatusCell>
                <StatusCell $w={41} $red>49.73</StatusCell>
                <StatusCell $w={46} $red>0.70%</StatusCell>
                <StatusCell $w={46}>1090亿</StatusCell>
                <StatusCell $w={25}>沪深</StatusCell>
                <StatusCell $w={56} $red>3706.06</StatusCell>
                <StatusCell $w={43} $red>11.38</StatusCell>
                <StatusCell $w={46} $red>0.31%</StatusCell>
                <StatusCell $w={44}>1248亿</StatusCell>
                <StatusCell $w={26}>创业</StatusCell>
                <StatusCell $w={60} $red>1798.57</StatusCell>
                <StatusCell $w={38} $red>5.09</StatusCell>
                <StatusCell $w={46} $red>0.28%</StatusCell>
                <StatusCell $w={46}>702.0亿</StatusCell>
                <StatusDivider $mr={3} />
                <SignalBox red={[13, 11]} green={[25, 10]} lower="#108020" />
                <StatusGap $w={1} />
                <SignalBox red={[15, 9]} green={[25, 3]} lower="#e01010" />
                <StatusGap $w={3} />
                <StatusDivider $mr={4} />
                <ServerName>bj41.1</ServerName>
                <TrayIcons />
            </StatusBar>

            <ToolWindow>
                <ToolHead><CloseButton>×</CloseButton></ToolHead>
                <ToolGrid>
                    {tools.map((t, i) => <ToolCell key={i} viewBox="0 0 23 22">{t}</ToolCell>)}
                </ToolGrid>
            </ToolWindow>
            <UploadChip>
                <UploadIcon>
                    <svg width="22" height="18" viewBox="0 0 22 18">
                        <g fill="none" stroke="#fff" strokeWidth="2.4">
                            <circle cx="11" cy="6" r="3.8" />
                            <circle cx="6" cy="12" r="3.8" />
                            <circle cx="16" cy="12" r="3.8" />
                        </g>
                    </svg>
                </UploadIcon>
                <UploadLabel>拖拽上传</UploadLabel>
            </UploadChip>
            <ImeBar>
                <Mascot />
                <ImeStrip>
                    <span>中</span>
                    <svg width="15" height="17" viewBox="0 0 14 16"><path d="M10 1C11 7 7 12 1 12C5 16 13 15 13 8C13 5 12 3 10 1Z" fill="#1676d8" /></svg>
                    <svg width="15" height="17" viewBox="0 0 14 16"><circle cx="3" cy="4" r="2" fill="none" stroke="#1676d8" /><path d="M10 8H13V11C13 13 11 15 9 15L10 12H9Z" fill="#1676d8" /></svg>
                    <svg width="20" height="19" viewBox="0 0 18 17"><path d="M5 2L1 6L4 8V16H14V8L17 6L13 2C11 5 7 5 5 2Z" fill="none" stroke="#1676d8" strokeWidth="1.5" /><circle cx="14" cy="3" r="2.6" fill="#f05040" /></svg>
                    <svg width="17" height="17" viewBox="0 0 16 16"><circle cx="8" cy="8" r="2.6" fill="none" stroke="#1676d8" strokeWidth="1.5" /><circle cx="8" cy="8" r="5.6" fill="none" stroke="#1676d8" strokeWidth="2.4" strokeDasharray="2.2 2.2" /></svg>
                </ImeStrip>
            </ImeBar>
            <Watermark>178448.COM</Watermark>
        </Page>
    )
}

export default App
